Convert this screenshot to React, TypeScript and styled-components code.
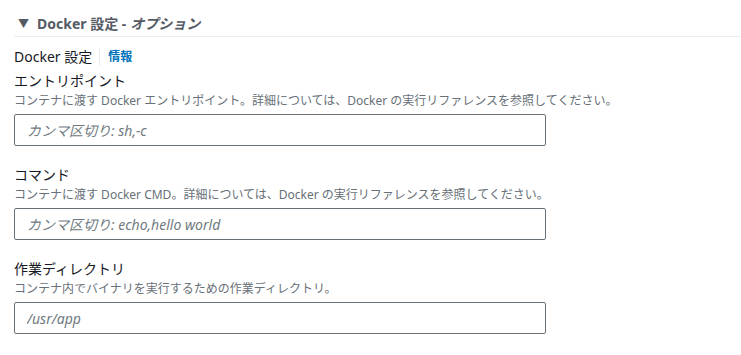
import React from 'react'
import styled, { createGlobalStyle } from 'styled-components'

const GlobalStyle = createGlobalStyle`
  body {
    margin: 0;
    background: #ffffff;
    font-family: "Noto Sans", "Noto Sans CJK JP", sans-serif;
    color: #16191f;
  }
`

const Section = styled.section`
  padding: 10px 0 0 14px;
`

const Header = styled.div`
  display: flex;
  align-items: center;
  height: 26px;
  padding-left: 4px;
  border-bottom: 1px solid #eaeded;
  font-size: 14px;
  font-weight: 700;
  color: #545b64;
`

const Caret = styled.span`
  font-size: 11px;
  width: 19px;
`

const Optional = styled.i`
  margin-left: 4px;
  font-weight: 700;
`

const Body = styled.div`
  display: flex;
  flex-direction: column;
  padding-top: 10px;
`

const Title = styled.div`
  display: flex;
  align-items: center;
  font-size: 14px;
  line-height: 20px;
`

const Divider = styled.span`
  width: 1px;
  height: 18px;
  background: #eaeded;
  margin: 0 8px 0 7px;
`

const InfoLink = styled.a`
  color: #0073bb;
  font-size: 12px;
  font-weight: 700;
  text-decoration: none;
`

const Field = styled.div<{ $first?: boolean }>`
  display: flex;
  flex-direction: column;
  margin-top: ${(p) => (p.$first ? '3px' : '18px')};
`

const Label = styled.label`
  font-size: 14px;
  line-height: 22px;
  color: #16191f;
`

const Description = styled.div`
  font-size: 12px;
  line-height: 18px;
  color: #687078;
  margin-bottom: 4px;
`

const Input = styled.input`
  box-sizing: border-box;
  width: 532px;
  height: 32px;
  padding: 0 12px;
  border: 1px solid #687078;
  border-radius: 2px;
  font-family: inherit;
  font-size: 14px;
  color: #16191f;

  &::placeholder {
    color: #6f7a80;
    font-style: italic;
  }
`

const fields = [
  {
    label: 'エントリポイント',
    desc: 'コンテナに渡す Docker エントリポイント。詳細については、Docker の実行リファレンスを参照してください。',
    placeholder: 'カンマ区切り: sh,-c',
  },
  {
    label: 'コマンド',
    desc: 'コンテナに渡す Docker CMD。詳細については、Docker の実行リファレンスを参照してください。',
    placeholder: 'カンマ区切り: echo,hello world',
  },
  {
    label: '作業ディレクトリ',
    desc: 'コンテナ内でバイナリを実行するための作業ディレクトリ。',
    placeholder: '/usr/app',
  },
]

export default function App() {
  return (
    <>
      <GlobalStyle />
      <Section>
        <Header>
          <Caret>▼</Caret>
          Docker 設定 -<Optional>オプション</Optional>
        </Header>
        <Body>
          <Title>
            Docker 設定
            <Divider />
            <InfoLink href="#">情報</InfoLink>
          </Title>
          {fields.map((f, i) => (
            <Field key={f.label} $first={i === 0}>
              <Label>{f.label}</Label>
              <Description>{f.desc}</Description>
              <Input placeholder={f.placeholder} />
            </Field>
          ))}
        </Body>
      </Section>
    </>
  )
}
